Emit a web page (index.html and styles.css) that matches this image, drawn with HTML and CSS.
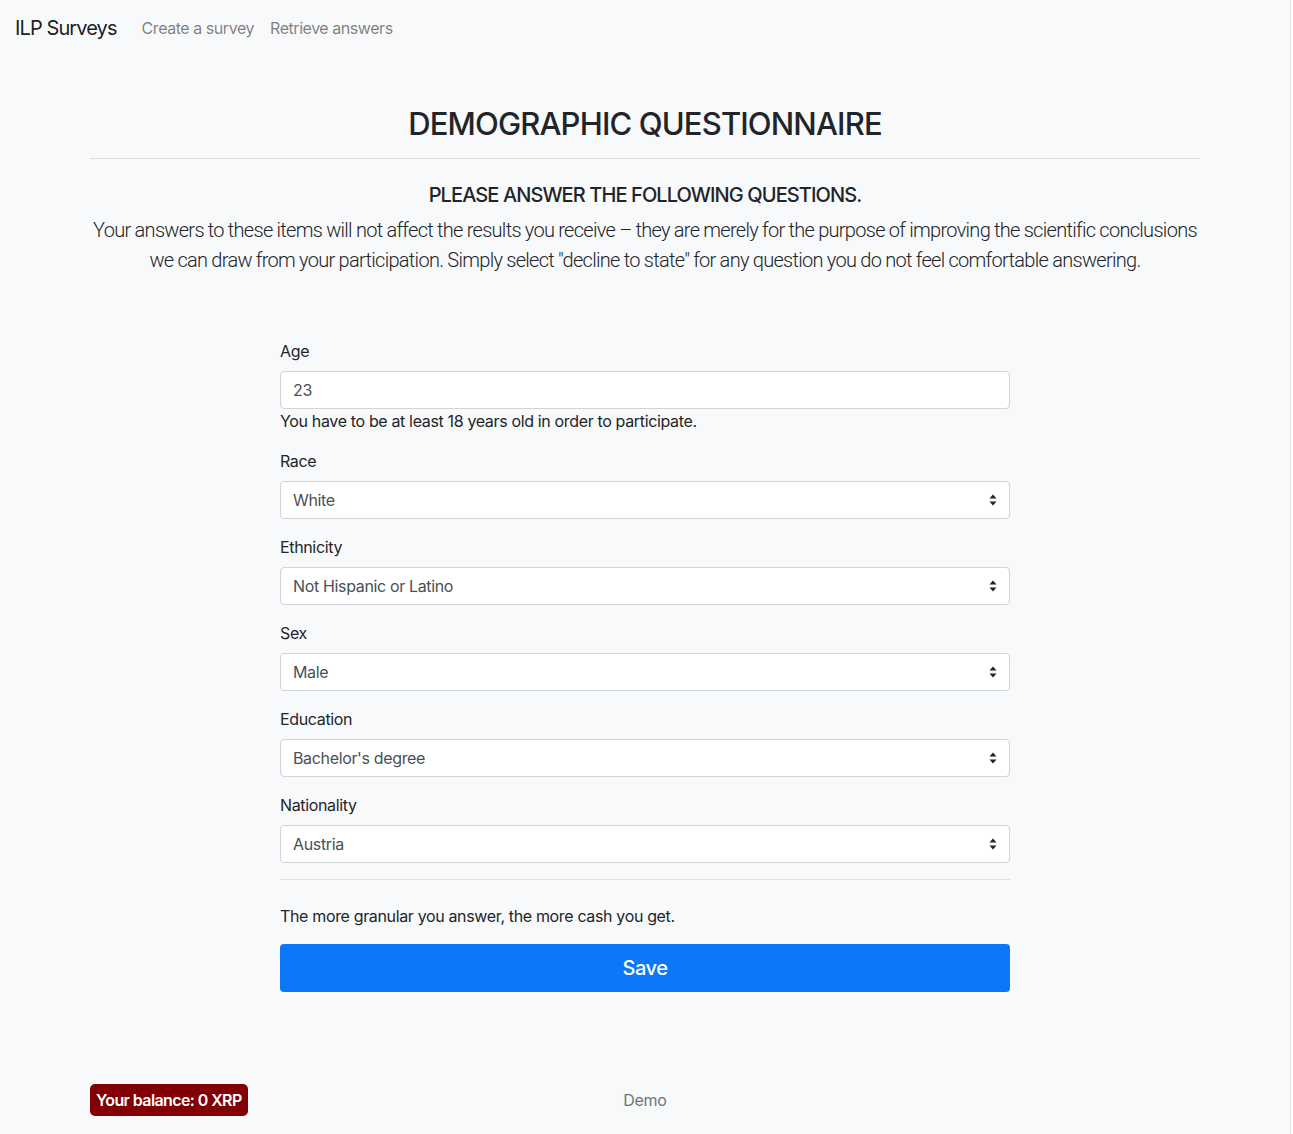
FILE: index.html
```html
<!DOCTYPE html>
<html lang="en">
<head>
<meta charset="utf-8">
<title>ILP Surveys</title>
<link rel="stylesheet" href="styles.css">
</head>
<body>
<div class="page">
  <nav class="navbar">
    <a class="brand" href="#">ILP Surveys</a>
    <a class="nav-link" href="#">Create a survey</a>
    <a class="nav-link" href="#">Retrieve answers</a>
  </nav>

  <main class="container">
    <h2 class="title">DEMOGRAPHIC QUESTIONNAIRE</h2>
    <hr class="rule">
    <h5 class="subtitle">PLEASE ANSWER THE FOLLOWING QUESTIONS.</h5>
    <p class="lead">Your answers to these items will not affect the results you receive – they are merely for the purpose of improving the scientific conclusions<br>we can draw from your participation. Simply select "decline to state" for any question you do not feel comfortable answering.</p>

    <form class="survey-form">
      <div class="form-group">
        <label class="label" for="age">Age</label>
        <input class="control" id="age" type="text" value="23">
        <div class="form-text">You have to be at least 18 years old in order to participate.</div>
      </div>

      <div class="form-group">
        <label class="label" for="race">Race</label>
        <div class="select-wrap">
          <select class="control select" id="race"><option>White</option></select>
          <svg class="arrows" width="8" height="12" viewBox="0 0 8 12"><path d="M4 0.5 L7.5 4.5 H0.5 Z M4 11.5 L7.5 7.5 H0.5 Z" fill="#222"/></svg>
        </div>
      </div>

      <div class="form-group">
        <label class="label" for="eth">Ethnicity</label>
        <div class="select-wrap">
          <select class="control select" id="eth"><option>Not Hispanic or Latino</option></select>
          <svg class="arrows" width="8" height="12" viewBox="0 0 8 12"><path d="M4 0.5 L7.5 4.5 H0.5 Z M4 11.5 L7.5 7.5 H0.5 Z" fill="#222"/></svg>
        </div>
      </div>

      <div class="form-group">
        <label class="label" for="sex">Sex</label>
        <div class="select-wrap">
          <select class="control select" id="sex"><option>Male</option></select>
          <svg class="arrows" width="8" height="12" viewBox="0 0 8 12"><path d="M4 0.5 L7.5 4.5 H0.5 Z M4 11.5 L7.5 7.5 H0.5 Z" fill="#222"/></svg>
        </div>
      </div>

      <div class="form-group">
        <label class="label" for="edu">Education</label>
        <div class="select-wrap">
          <select class="control select" id="edu"><option>Bachelor's degree</option></select>
          <svg class="arrows" width="8" height="12" viewBox="0 0 8 12"><path d="M4 0.5 L7.5 4.5 H0.5 Z M4 11.5 L7.5 7.5 H0.5 Z" fill="#222"/></svg>
        </div>
      </div>

      <div class="form-group">
        <label class="label" for="nat">Nationality</label>
        <div class="select-wrap">
          <select class="control select" id="nat"><option>Austria</option></select>
          <svg class="arrows" width="8" height="12" viewBox="0 0 8 12"><path d="M4 0.5 L7.5 4.5 H0.5 Z M4 11.5 L7.5 7.5 H0.5 Z" fill="#222"/></svg>
        </div>
      </div>

      <hr class="form-rule">
      <p class="note">The more granular you answer, the more cash you get.</p>
      <button class="btn-save" type="button">Save</button>
    </form>
  </main>

  <footer class="footer">
    <div class="footer-left"><span class="badge">Your balance: 0 XRP</span></div>
    <div class="footer-center">Demo</div>
    <div class="footer-right"></div>
  </footer>
</div>
</body>
</html>
```

FILE: styles.css
```css
* { box-sizing: border-box; }

html, body {
  margin: 0;
  padding: 0;
  background: #ffffff;
}

body {
  font-family: Inter, "Noto Sans", "Liberation Sans", sans-serif;
  color: #212529;
  font-size: 16px;
  line-height: 1.5;
}

.page {
  width: 1291px;
  min-height: 1134px;
  background: #f8f9fa;
  border-right: 1px solid #e3e3e3;
}

.navbar {
  display: flex;
  align-items: center;
  padding: 8px 16px 8px 15px;
  height: 56px;
}

.brand {
  font-size: 20px;
  line-height: 30px;
  color: rgba(0, 0, 0, 0.9);
  text-decoration: none;
  margin-right: 17px;
  letter-spacing: -0.9px;
}

.nav-link {
  padding: 8px;
  color: rgba(0, 0, 0, 0.5);
  text-decoration: none;
  font-size: 16px;
  line-height: 24px;
  letter-spacing: -0.45px;
}

.container {
  width: 1110px;
  margin: 0 auto;
}

.title {
  margin: 49px 0 0;
  font-size: 31px;
  font-weight: 500;
  line-height: 38px;
  text-align: center;
  letter-spacing: -0.85px;
}

.rule {
  margin: 15px 0 0;
  border: 0;
  border-top: 1px solid rgba(0, 0, 0, 0.1);
}

.subtitle {
  margin: 24px 0 8px;
  font-size: 20px;
  line-height: 24px;
  font-weight: 500;
  text-align: center;
  letter-spacing: -0.9px;
}

.lead {
  margin: 0;
  font-family: Roboto, Inter, sans-serif;
  font-size: 20px;
  font-weight: 300;
  line-height: 30px;
  text-align: center;
  letter-spacing: -0.7px;
  word-spacing: -0.2px;
  white-space: nowrap;
}

.survey-form {
  width: 730px;
  margin: 64px auto 0;
}

.form-group {
  margin-bottom: 16px;
}

.label {
  display: block;
  margin-bottom: 8px;
  line-height: 24px;
  letter-spacing: -0.35px;
}

.control {
  display: block;
  width: 100%;
  height: 38px;
  padding: 6px 12px;
  font-family: inherit;
  font-size: 16px;
  line-height: 24px;
  color: #495057;
  background: #ffffff;
  border: 1px solid #ced4da;
  border-radius: 4px;
  letter-spacing: -0.35px;
}

.form-text {
  line-height: 24px;
  letter-spacing: -0.35px;
}

.select-wrap {
  position: relative;
}

.select {
  appearance: none;
  -webkit-appearance: none;
  padding-right: 32px;
}

.arrows {
  position: absolute;
  right: 13px;
  top: 13px;
  pointer-events: none;
}

.form-rule {
  margin: 0 0 24px;
  border: 0;
  border-top: 1px solid rgba(0, 0, 0, 0.1);
}

.note {
  margin: 0 0 16px;
  line-height: 24px;
  letter-spacing: -0.35px;
}

.btn-save {
  display: block;
  width: 100%;
  height: 48px;
  border: 0;
  border-radius: 4px;
  background: #0d78f7;
  color: #ffffff;
  font-family: inherit;
  font-size: 20px;
  font-weight: 500;
  line-height: 30px;
  letter-spacing: -0.5px;
}

.footer {
  width: 1110px;
  margin: 92px auto 0;
  display: grid;
  grid-template-columns: 1fr 1fr 1fr;
  align-items: center;
  padding-bottom: 18px;
}

.badge {
  display: inline-block;
  background: #820005;
  color: #ffffff;
  font-size: 16px;
  font-weight: 600;
  line-height: 20px;
  padding: 6px 6px;
  border-radius: 5px;
  letter-spacing: -0.6px;
}

.footer-center {
  text-align: center;
  color: #6c757d;
  letter-spacing: -0.3px;
}
```
